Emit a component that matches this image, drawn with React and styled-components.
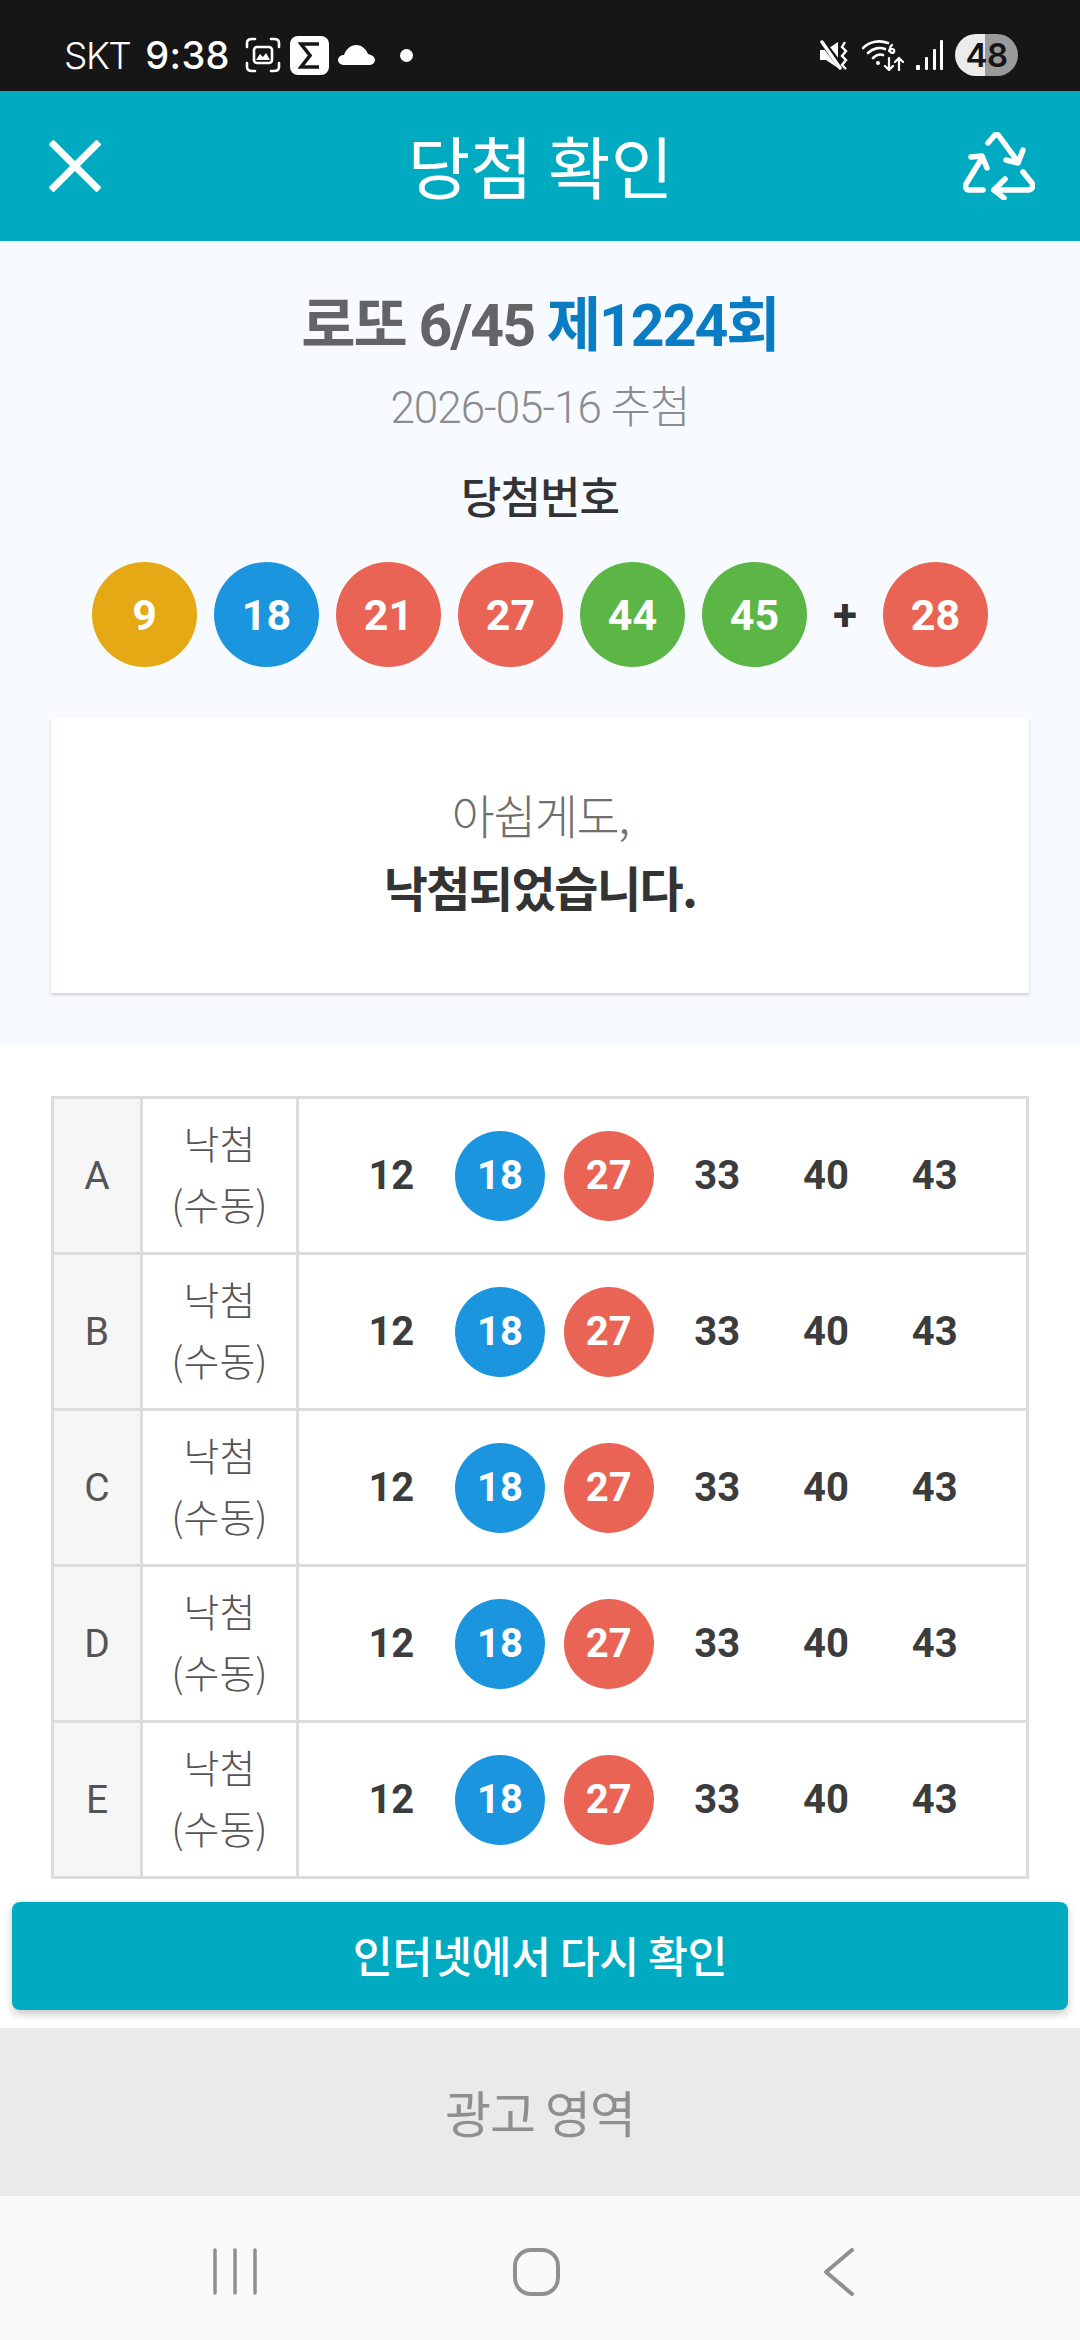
import styled, { createGlobalStyle } from "styled-components";

const GlobalStyle = createGlobalStyle`
  html, body { margin: 0; padding: 0; background: #fff; }
  body { font-family: Roboto, "Noto Sans CJK KR", sans-serif; }
  * { box-sizing: border-box; }
`;

const Page = styled.div`
  width: 1080px;
  height: 2340px;
  display: flex;
  flex-direction: column;
  background: #fff;
  overflow: hidden;
`;

const StatusBar = styled.div`
  height: 91px;
  background: #161616;
  color: #fff;
  display: flex;
  justify-content: space-between;
  align-items: center;
  padding: 19px 62px 0 64px;
`;

const StatusGroup = styled.div`
  display: flex;
  align-items: center;
  gap: ${(p) => p.$gap || 0}px;
`;

const Carrier = styled.span`
  font-family: Inter, sans-serif;
  font-size: 37px;
  font-weight: 300;
  letter-spacing: -1.5px;
  margin-right: 15px;
`;

const Clock = styled.span`
  font-family: Inter, sans-serif;
  font-size: 38px;
  font-weight: 500;
  letter-spacing: 0.3px;
  margin-right: 15px;
`;

const SigmaBox = styled.div`
  width: 39px;
  height: 39px;
  border-radius: 8px;
  background: #fff;
  display: flex;
  align-items: center;
  justify-content: center;
  margin: 0 9px;
`;

const Dot = styled.div`
  width: 13px;
  height: 13px;
  border-radius: 50%;
  background: #fff;
  margin-left: 25px;
`;

const Battery = styled.div`
  width: 63px;
  height: 42px;
  border-radius: 21px;
  background: linear-gradient(to right, #ececec 0 48%, #9a9a9a 48% 100%);
  color: #161616;
  font-family: Inter, sans-serif;
  font-size: 33px;
  font-weight: 600;
  letter-spacing: -0.5px;
  display: flex;
  align-items: center;
  justify-content: center;
`;

const Header = styled.header`
  height: 150px;
  background: #00abc2;
  color: #fff;
  display: flex;
  align-items: center;
  justify-content: space-between;
  padding: 0 45px 0 49px;
`;

const HeaderTitle = styled.h1`
  margin: 0 0 4px 17px;
  font-family: "Noto Sans CJK KR", sans-serif;
  font-size: 68px;
  font-weight: 400;
  letter-spacing: 0;
`;

const Summary = styled.section`
  height: 804px;
  background: #f7fbff;
  padding: 45px 51px 52px;
  display: flex;
  flex-direction: column;
  align-items: center;
`;

const DrawTitle = styled.div`
  font-family: Roboto, "Noto Sans CJK KR", sans-serif;
  font-size: 59px;
  line-height: 80px;
  font-weight: 700;
  letter-spacing: -2px;
  color: #636466;
`;

const DrawNumber = styled.span`
  color: #0a7cc4;
`;

const DrawDate = styled.div`
  margin-top: 12px;
  font-size: 44px;
  line-height: 60px;
  font-weight: 300;
  letter-spacing: -1px;
  color: #8a8c90;
`;

const SectionLabel = styled.div`
  margin-top: 27px;
  font-family: "Noto Sans CJK KR", sans-serif;
  font-size: 44px;
  line-height: 60px;
  font-weight: 500;
  letter-spacing: -1px;
  color: #333;
`;

const WinningRow = styled.div`
  margin-top: 37px;
  display: flex;
  align-items: center;
  gap: 17px;
`;

const Ball = styled.div`
  width: ${(p) => p.$size}px;
  height: ${(p) => p.$size}px;
  border-radius: 50%;
  background: ${(p) => p.$color};
  color: #fff;
  font-family: Roboto, sans-serif;
  font-size: ${(p) => (p.$size > 100 ? 43 : 40)}px;
  font-weight: 700;
  display: flex;
  align-items: center;
  justify-content: center;
  flex: none;
`;

const Plus = styled.div`
  width: 42px;
  text-align: center;
  font-family: Roboto, sans-serif;
  font-size: 44px;
  font-weight: 700;
  color: #333;
`;

const ResultCard = styled.div`
  margin-top: 51px;
  width: 978px;
  height: 275px;
  background: #fff;
  box-shadow: 0 2px 3px rgba(0, 0, 0, 0.18);
  display: flex;
  flex-direction: column;
  align-items: center;
  justify-content: center;
  padding-bottom: 12px;
  font-family: "Noto Sans CJK KR", sans-serif;
  line-height: 73px;
  letter-spacing: -1.5px;
`;

const ResultLead = styled.div`
  font-size: 47px;
  font-weight: 300;
  color: #6f6f6f;
`;

const ResultMain = styled.div`
  font-size: 48px;
  font-weight: 700;
  color: #333;
`;

const TicketTable = styled.div`
  margin: 51px 51px 0;
  width: 978px;
  border: solid #dcdcdc;
  border-width: 3px 3px 0;
`;

const TicketRow = styled.div`
  height: 156px;
  display: grid;
  grid-template-columns: 89px 156px 1fr;
  border-bottom: 3px solid #dcdcdc;
`;

const SlotCell = styled.div`
  background: #f6f6f6;
  border-right: 3px solid #dcdcdc;
  display: flex;
  align-items: center;
  justify-content: center;
  font-size: 39px;
  color: #555;
`;

const StatusCell = styled.div`
  border-right: 3px solid #dcdcdc;
  display: flex;
  align-items: center;
  justify-content: center;
  text-align: center;
  padding-bottom: 6px;
  font-family: "Noto Sans CJK KR", sans-serif;
  font-size: 39px;
  line-height: 61px;
  font-weight: 300;
  color: #555;
`;

const NumbersCell = styled.div`
  display: grid;
  grid-template-columns: repeat(6, 1fr);
  align-items: center;
  justify-items: center;
  padding: 0 37px 0 38px;
`;

const PlainNumber = styled.span`
  font-size: 40px;
  font-weight: 700;
  color: #3c3c3c;
`;

const RecheckButton = styled.button`
  margin: 23px 12px 0;
  padding: 0 0 4px;
  height: 108px;
  width: 1056px;
  border: 0;
  border-radius: 8px;
  background: #00abc2;
  color: #fff;
  font-family: "Noto Sans CJK KR", sans-serif;
  font-size: 43.5px;
  font-weight: 500;
  letter-spacing: -0.5px;
  box-shadow: 0 4px 8px rgba(0, 0, 0, 0.22);
`;

const AdArea = styled.div`
  margin-top: 18px;
  padding-bottom: 3px;
  height: 168px;
  background: #e9eaec;
  color: #8f8f8f;
  display: flex;
  align-items: center;
  justify-content: center;
  font-family: "Noto Sans CJK KR", sans-serif;
  font-size: 50px;
  letter-spacing: -1px;
`;

const NavBar = styled.nav`
  height: 144px;
  background: #fafafa;
  display: flex;
  align-items: flex-start;
  justify-content: space-between;
  padding: 52px 226px 0 213px;
`;

function CloseIcon() {
  return (
    <svg width="52" height="52" viewBox="0 0 52 52" fill="none" stroke="#fff" strokeWidth="7">
      <path d="M2 2 50 50M50 2 2 50" />
    </svg>
  );
}

function RecycleIcon() {
  return (
    <svg width="72" height="68" viewBox="0 0 72 68" fill="none" stroke="#fff" strokeWidth="5.5" strokeLinecap="round" strokeLinejoin="round">
      <path d="M25 11 31 4C32 2 35 2 36 4L55 30" />
      <path d="M60 18 55 31 43 28" />
      <path d="M20 58H6C3 58 2 55 3 52L19 26" />
      <path d="M8 25 19 24 24 36" />
      <path d="M31 58H65C69 58 71 54 69 51L60 40" />
      <path d="M42 47 31 58 41 66" />
    </svg>
  );
}

function ScreenshotIcon() {
  return (
    <svg width="36" height="36" viewBox="0 0 36 36" fill="none" stroke="#fff" strokeWidth="2.6" strokeLinecap="round">
      <path d="M2 10V6C2 3 4 2 7 2H10M26 2H29C32 2 34 3 34 6V10M34 26V30C34 33 32 34 29 34H26M10 34H7C4 34 2 33 2 30V26" />
      <rect x="9" y="10" width="18" height="16" rx="3" />
      <path d="M11 23 15 17 18 20 21 16 25 23Z" fill="#fff" stroke="none" />
    </svg>
  );
}

function SigmaIcon() {
  return (
    <svg width="23" height="27" viewBox="0 0 23 27" fill="none" stroke="#161616" strokeWidth="3.6">
      <path d="M21 2H3L12 13.5 3 25H21" />
    </svg>
  );
}

function CloudIcon() {
  return (
    <svg width="37" height="20" viewBox="0 0 37 20" fill="#fff">
      <path d="M7 20C3 20 0 18 0 15 0 12 3 10 6 10 8 4 13 0 18 0 24 0 28 4 30 9 34 10 37 12 37 15 37 18 34 20 31 20Z" />
    </svg>
  );
}

function MuteIcon() {
  return (
    <svg width="30" height="32" viewBox="0 0 30 32" fill="none">
      <path d="M0 11H6L18 3V29L6 21H0Z" fill="#fff" />
      <path d="M1 1 22 29" stroke="#161616" strokeWidth="6" />
      <path d="M2 3 20 29" stroke="#fff" strokeWidth="3.4" strokeLinecap="round" />
      <path d="M25 3 22 8 26 12 22 17 26 21 22 26 26 30" stroke="#fff" strokeWidth="2.4" />
    </svg>
  );
}

function WifiIcon() {
  return (
    <svg width="42" height="32" viewBox="0 0 42 32" fill="none" stroke="#fff" strokeWidth="2.6" strokeLinecap="round">
      <path d="M1 9C8 2 18 1 26 4M6 14C11 9 18 8 23 10M11 19C14 16 18 15 21 16" />
      <circle cx="16" cy="24" r="2" fill="#fff" stroke="none" />
      <path d="M30 6C27 8 27 13 30 14 33 14 33 10 30 10 28 10 27 11 27 12" strokeWidth="2.2" />
      <path d="M27 19V31M23 27 27 31 31 27M37 31V19M33 23 37 19 41 23" strokeWidth="2.2" />
    </svg>
  );
}

function SignalIcon() {
  return (
    <svg width="27" height="30" viewBox="0 0 27 30" fill="#fff">
      <rect x="0" y="25" width="4" height="5" rx="1" />
      <rect x="9" y="17" width="3" height="13" rx="1" />
      <rect x="17" y="9" width="3" height="21" rx="1" />
      <rect x="24" y="0" width="3" height="30" rx="1" />
    </svg>
  );
}

function NavRecents() {
  return (
    <svg width="44" height="47" viewBox="0 0 44 47" fill="none" stroke="#909090" strokeWidth="3.5" strokeLinecap="round">
      <path d="M2 2V45M22 2V45M42 2V45" />
    </svg>
  );
}

function NavHome() {
  return (
    <svg width="47" height="48" viewBox="0 0 47 48" fill="none" stroke="#909090" strokeWidth="4">
      <rect x="2" y="2" width="43" height="44" rx="16" />
    </svg>
  );
}

function NavBack() {
  return (
    <svg width="39" height="48" viewBox="0 0 39 48" fill="none" stroke="#909090" strokeWidth="4" strokeLinecap="round" strokeLinejoin="round">
      <path d="M37 2 11 24 37 46" />
    </svg>
  );
}

const YELLOW = "#e4a914";
const BLUE = "#1b95de";
const RED = "#e96454";
const GREEN = "#5cb646";

const winning = [
  [9, YELLOW],
  [18, BLUE],
  [21, RED],
  [27, RED],
  [44, GREEN],
  [45, GREEN],
];

const tickets = ["A", "B", "C", "D", "E"];
const picks = [
  [12],
  [18, BLUE],
  [27, RED],
  [33],
  [40],
  [43],
];

export default function App() {
  return (
    <Page>
      <GlobalStyle />
      <StatusBar>
        <StatusGroup>
          <Carrier>SKT</Carrier>
          <Clock>9:38</Clock>
          <ScreenshotIcon />
          <SigmaBox>
            <SigmaIcon />
          </SigmaBox>
          <CloudIcon />
          <Dot />
        </StatusGroup>
        <StatusGroup $gap={12}>
          <MuteIcon />
          <WifiIcon />
          <SignalIcon />
          <Battery>48</Battery>
        </StatusGroup>
      </StatusBar>

      <Header>
        <CloseIcon />
        <HeaderTitle>당첨 확인</HeaderTitle>
        <RecycleIcon />
      </Header>

      <Summary>
        <DrawTitle>
          로또 6/45 <DrawNumber>제1224회</DrawNumber>
        </DrawTitle>
        <DrawDate>2026-05-16 추첨</DrawDate>
        <SectionLabel>당첨번호</SectionLabel>
        <WinningRow>
          {winning.map(([n, color]) => (
            <Ball key={n} $size={105} $color={color}>{n}</Ball>
          ))}
          <Plus>+</Plus>
          <Ball $size={105} $color={RED}>28</Ball>
        </WinningRow>
        <ResultCard>
          <ResultLead>아쉽게도,</ResultLead>
          <ResultMain>낙첨되었습니다.</ResultMain>
        </ResultCard>
      </Summary>

      <TicketTable>
        {tickets.map((t) => (
          <TicketRow key={t}>
            <SlotCell>{t}</SlotCell>
            <StatusCell>
              낙첨
              <br />
              (수동)
            </StatusCell>
            <NumbersCell>
              {picks.map(([n, color]) =>
                color ? (
                  <Ball key={n} $size={90} $color={color}>{n}</Ball>
                ) : (
                  <PlainNumber key={n}>{n}</PlainNumber>
                )
              )}
            </NumbersCell>
          </TicketRow>
        ))}
      </TicketTable>

      <RecheckButton>인터넷에서 다시 확인</RecheckButton>
      <AdArea>광고 영역</AdArea>

      <NavBar>
        <NavRecents />
        <NavHome />
        <NavBack />
      </NavBar>
    </Page>
  );
}
